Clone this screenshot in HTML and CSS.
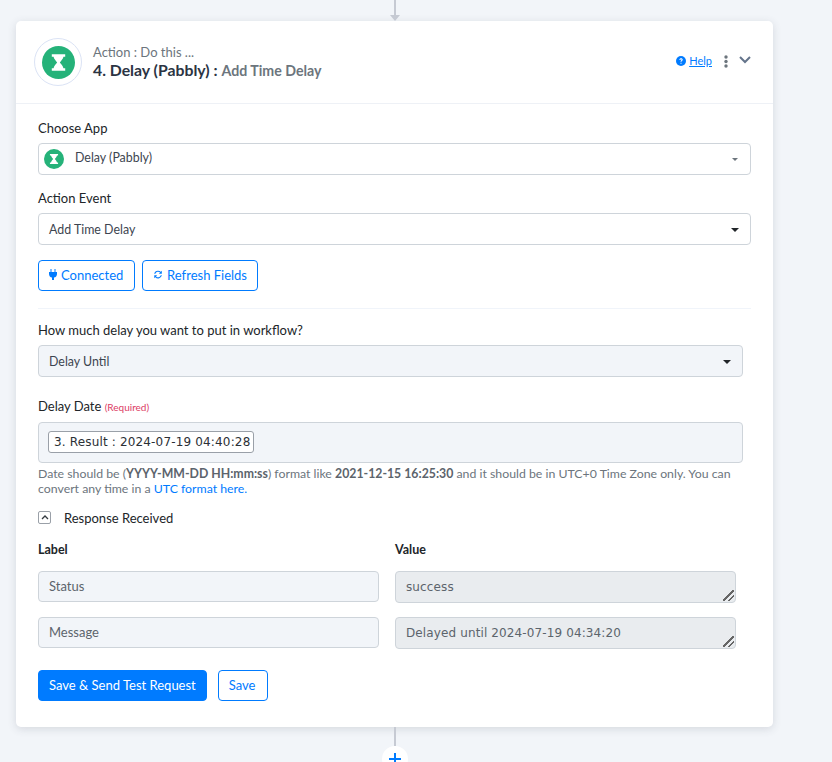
FILE: index.html
```html
<!DOCTYPE html>
<html lang="en">
<head>
    <meta charset="UTF-8">
    <title>Delay (Pabbly)</title>
    <link rel="stylesheet" href="styles.css">
</head>
<body>
    <!-- Connector above the card -->
    <div class="connector-top">
        <svg width="12" height="21" viewBox="0 0 12 21"><path d="M5 0h2v15h4l-5 6-5-6h4z" fill="#c6cad3"/></svg>
    </div>

    <div class="card">
        <div class="card-head">
            <div class="logo-ring">
                <svg class="hourglass" width="33" height="33" viewBox="0 0 32 32"><circle cx="16" cy="16" r="16" fill="#25b279"/><path d="M9.500 8h13v2.500h-1.700c-.5 2.400-2.300 3.800-3.500 5.500 1.200 1.700 3 3.100 3.500 5.500h1.700V24h-13v-2.500h1.700c.5-2.400 2.300-3.800 3.500-5.500-1.200-1.700-3-3.100-3.500-5.500H9.500z" fill="#fff"/></svg>
            </div>
            <div class="head-text">
                <div class="head-small">Action : Do this ...</div>
                <div class="head-title">4. Delay (Pabbly) : <span class="head-sub">Add Time Delay</span></div>
            </div>
            <div class="head-tools">
                <svg width="10" height="10" viewBox="0 0 10 10"><circle cx="5" cy="5" r="5" fill="#007bff"/><path d="M3.400 3.900c0-1 .7-1.600 1.700-1.600s1.600.6 1.600 1.400c0 1.100-1.200 1.100-1.200 2.100H4.500c0-1.400 1.100-1.400 1.100-2 0-.3-.2-.6-.6-.6s-.6.300-.6.700zM4.500 6.700h1v1h-1z" fill="#fff"/></svg>
                <a class="help-link" href="#">Help</a>
                <svg class="dots" width="4" height="13" viewBox="0 0 4 13"><circle cx="2" cy="2" r="1.700" fill="#6c757d"/><circle cx="2" cy="6.500" r="1.700" fill="#6c757d"/><circle cx="2" cy="11" r="1.700" fill="#6c757d"/></svg>
                <svg class="chevron" width="12" height="8" viewBox="0 0 12 8"><path d="M1 1l5 5 5-5" fill="none" stroke="#64748b" stroke-width="2"/></svg>
            </div>
        </div>

        <div class="card-body">
            <label class="field-label">Choose App</label>
            <div class="select app-select">
                <svg width="20" height="20" viewBox="0 0 32 32"><circle cx="16" cy="16" r="16" fill="#25b279"/><path d="M9.500 8h13v2.500h-1.700c-.5 2.400-2.300 3.800-3.500 5.500 1.200 1.700 3 3.100 3.500 5.500h1.700V24h-13v-2.500h1.700c.5-2.400 2.300-3.800 3.500-5.500-1.200-1.700-3-3.100-3.500-5.500H9.500z" fill="#fff"/></svg>
                <span class="app-name">Delay (Pabbly)</span>
                <span class="caret caret-small"></span>
            </div>

            <label class="field-label">Action Event</label>
            <div class="select select-last">
                <span>Add Time Delay</span>
                <span class="caret"></span>
            </div>

            <div class="btn-row">
                <button class="btn btn-outline btn-connected">
                    <svg width="8" height="11" viewBox="0 0 8 11"><path d="M1.500 0h1v3h3V0h1v3H8v2c0 2-1.300 3.300-3 3.500V11H3V8.500C1.300 8.300 0 7 0 5V3h1.500z" fill="#007bff"/></svg>
                    Connected
                </button>
                <button class="btn btn-outline btn-refresh">
                    <svg width="11" height="11" viewBox="0 0 24 24"><path d="M12 3a9 9 0 0 1 6.400 2.600L21 3v7h-7l2.800-2.800A6.800 6.800 0 0 0 5.500 10H2.800A9.200 9.200 0 0 1 12 3zM3 14h7l-2.800 2.800A6.800 6.800 0 0 0 18.500 14h2.700A9.200 9.200 0 0 1 5.600 18.400L3 21z" fill="#007bff"/></svg>
                    Refresh Fields
                </button>
            </div>

            <hr class="divider">

            <div class="narrow">
                <label class="field-label">How much delay you want to put in workflow?</label>
                <div class="select select-grey">
                    <span>Delay Until</span>
                    <span class="caret"></span>
                </div>

                <label class="field-label date-label">Delay Date <span class="required">(Required)</span></label>
                <div class="token-box">
                    <span class="token">3. Result : 2024-07-19 04:40:28</span>
                </div>
            </div>
            <p class="help-text">
                <span class="help-line">Date should be (<b>YYYY-MM-DD HH:mm:ss</b>) format like <b>2021-12-15 16:25:30</b> and it should be in UTC+0 Time Zone only. You can</span>
                <span class="help-line">convert any time in a <a href="#">UTC format here.</a></span>
            </p>

            <div class="response-head">
                <span class="toggle">
                    <svg width="8" height="5" viewBox="0 0 8 5"><path d="M1 4l3-3 3 3" fill="none" stroke="#343a40" stroke-width="1.300"/></svg>
                </span>
                Response Received
            </div>

            <div class="response-grid">
                <div class="col-title">Label</div>
                <div class="col-title">Value</div>
                <div class="cell">Status</div>
                <div class="cell cell-value">success<span class="grip"></span></div>
                <div class="cell">Message</div>
                <div class="cell cell-value">Delayed until 2024-07-19 04:34:20<span class="grip"></span></div>
            </div>

            <div class="btn-row actions">
                <button class="btn btn-solid">Save &amp; Send Test Request</button>
                <button class="btn btn-outline btn-save">Save</button>
            </div>
        </div>
    </div>

    <!-- Connector below the card -->
    <div class="connector-bottom">
        <div class="line"></div>
        <div class="plus">
            <svg width="12" height="12" viewBox="0 0 12 12"><path d="M5 0h2v5h5v2H7v5H5V7H0V5h5z" fill="#007bff"/></svg>
        </div>
    </div>
</body>
</html>
```

FILE: styles.css
```css
/* General Styling */
html, body {
    height: 762px;
    margin: 0;
    overflow: hidden;
}
body {
    background-color: #f2f5f9;
    color: #212529;
    font-family: Lato, "Noto Sans", Arial, sans-serif;
    font-size: 13px;
    line-height: 16px;
}
button {
    font-family: inherit;
}

/* Connectors */
.connector-top {
    width: 757px;
    margin-left: 16px;
    height: 21px;
    display: flex;
    justify-content: center;
}
.connector-bottom {
    width: 757px;
    margin-left: 16px;
    display: flex;
    flex-direction: column;
    align-items: center;
}
.line {
    width: 2px;
    height: 19px;
    background-color: #c6cad3;
}
.plus {
    width: 26px;
    height: 26px;
    border-radius: 50%;
    background-color: white;
    display: flex;
    justify-content: center;
    align-items: center;
}

/* Card */
.card {
    width: 757px;
    height: 706px;
    margin-left: 16px;
    background-color: white;
    border-radius: 5px;
    box-shadow: 0 2px 8px rgba(60, 70, 90, 0.16);
}
.card-head {
    height: 83px;
    box-sizing: border-box;
    border-bottom: 1px solid #eef1f6;
    display: flex;
    align-items: center;
    padding: 0 22px 0 18px;
}
.logo-ring {
    width: 46px;
    height: 46px;
    border: 1px solid #dbe3f5;
    border-radius: 50%;
    display: flex;
    justify-content: center;
    align-items: center;
    flex-shrink: 0;
}
.head-text {
    margin-left: 11px;
    margin-bottom: 1px;
    flex-grow: 1;
}
.head-small {
    color: #6c757d;
    font-size: 13px;
    line-height: 16px;
}
.head-title {
    color: #2b3443;
    font-size: 15.800px;
    font-weight: 700;
    line-height: 19px;
}
.head-sub {
    color: #6c757d;
    font-size: 14.200px;
}
.head-tools {
    display: flex;
    align-items: center;
    margin-bottom: 3px;
}
.help-link {
    color: #007bff;
    font-size: 11px;
    margin-left: 3px;
}
.dots {
    margin-left: 12px;
    margin-top: 1px;
}
.chevron {
    margin-left: 11px;
    margin-bottom: 2px;
}

/* Form */
.card-body {
    padding: 15px 22px 0;
}
.field-label {
    display: block;
    color: #212529;
    font-size: 13px;
    line-height: 17px;
    padding-top: 1px;
    margin-bottom: 6px;
}
.select {
    height: 32px;
    box-sizing: border-box;
    border: 1px solid #ced4da;
    border-radius: 4px;
    display: flex;
    align-items: center;
    justify-content: space-between;
    padding: 1px 11px 0 10px;
    margin-bottom: 14px;
    color: #3d4550;
    font-size: 12.400px;
}
.select-last {
    margin-bottom: 15px;
}
.app-select {
    padding: 0 11px 2px 5px;
    justify-content: flex-start;
}
.app-select svg {
    margin-top: 2px;
}
.app-name {
    margin-left: 11px;
    flex-grow: 1;
}
.select-grey {
    background-color: #f2f5f9;
}
.caret {
    width: 0;
    height: 0;
    border-left: 4.500px solid transparent;
    border-right: 4.500px solid transparent;
    border-top: 4.500px solid #212529;
}
.caret-small {
    border-left-width: 3.500px;
    border-right-width: 3.500px;
    border-top: 3.500px solid #6c757d;
    margin-right: 1px;
    margin-top: 2px;
}
.btn-row {
    display: flex;
    gap: 7px;
}
.btn {
    height: 31px;
    box-sizing: border-box;
    border-radius: 4px;
    font-size: 13px;
    padding: 0 10px 2px;
    display: flex;
    align-items: center;
    gap: 4px;
    white-space: nowrap;
}
.btn-connected {
    width: 97px;
}
.btn-refresh {
    width: 116px;
}
.btn-save {
    width: 50px;
}
.btn-outline {
    background-color: white;
    border: 1px solid #007bff;
    color: #007bff;
}
.btn-solid {
    background-color: #007bff;
    border: 1px solid #007bff;
    color: white;
}
.divider {
    border: none;
    border-top: 1px solid #f0f4fa;
    margin: 17px 0 12px;
}
.narrow {
    width: 705px;
}
.date-label {
    margin-top: 20px;
}
.required {
    color: #dc3c64;
    font-size: 10px;
}
.token-box {
    height: 41px;
    box-sizing: border-box;
    background-color: #f2f5f9;
    border: 1px solid #ced4da;
    border-radius: 4px;
    display: flex;
    align-items: center;
    padding: 0 0 2px 9px;
}
.token {
    background-color: white;
    border: 1px solid #9aa0a8;
    border-radius: 3px;
    padding: 2px 0 2px 5px;
    width: 199px;
    box-sizing: content-box;
    font-family: "DejaVu Sans", sans-serif;
    font-size: 12px;
    letter-spacing: 0.160px;
    line-height: 16px;
    color: #2b3036;
    white-space: nowrap;
    overflow: hidden;
}
.help-text {
    margin: 3px 0 0;
    color: #6c757d;
    font-size: 12.300px;
    line-height: 15px;
}
.help-line {
    display: block;
}
.help-text b {
    color: #5c646c;
}
.help-text a {
    color: #007bff;
    text-decoration: none;
}
.response-head {
    display: flex;
    align-items: center;
    margin-top: 13px;
    height: 17px;
    font-size: 13px;
}
.toggle {
    width: 13px;
    height: 13px;
    box-sizing: border-box;
    border: 1px solid #9aa0a8;
    border-radius: 2px;
    display: flex;
    justify-content: center;
    align-items: center;
    margin-right: 13px;
}
.response-grid {
    display: grid;
    grid-template-columns: 341px 341px;
    column-gap: 16px;
    row-gap: 14px;
    margin-top: 16px;
}
.col-title {
    font-weight: 700;
    font-size: 12.500px;
    line-height: 16px;
    margin-bottom: -1px;
}
.cell {
    height: 31px;
    box-sizing: border-box;
    background-color: #f2f5f9;
    border: 1px solid #ced4da;
    border-radius: 4px;
    padding: 0 10px 1px;
    display: flex;
    align-items: center;
    color: #5c646c;
}
.cell-value {
    height: 32px;
    background-color: #e9ecef;
    position: relative;
    padding-bottom: 1px;
    font-family: "DejaVu Sans", sans-serif;
    font-size: 12px;
    letter-spacing: 0.120px;
}
.grip {
    position: absolute;
    right: 1px;
    bottom: 1px;
    width: 11px;
    height: 11px;
    background: linear-gradient(135deg, transparent 45%, #666 45%, #666 55%, transparent 55%, transparent 70%, #666 70%, #666 80%, transparent 80%);
}
.actions {
    margin-top: 21px;
    gap: 11px;
}
```
